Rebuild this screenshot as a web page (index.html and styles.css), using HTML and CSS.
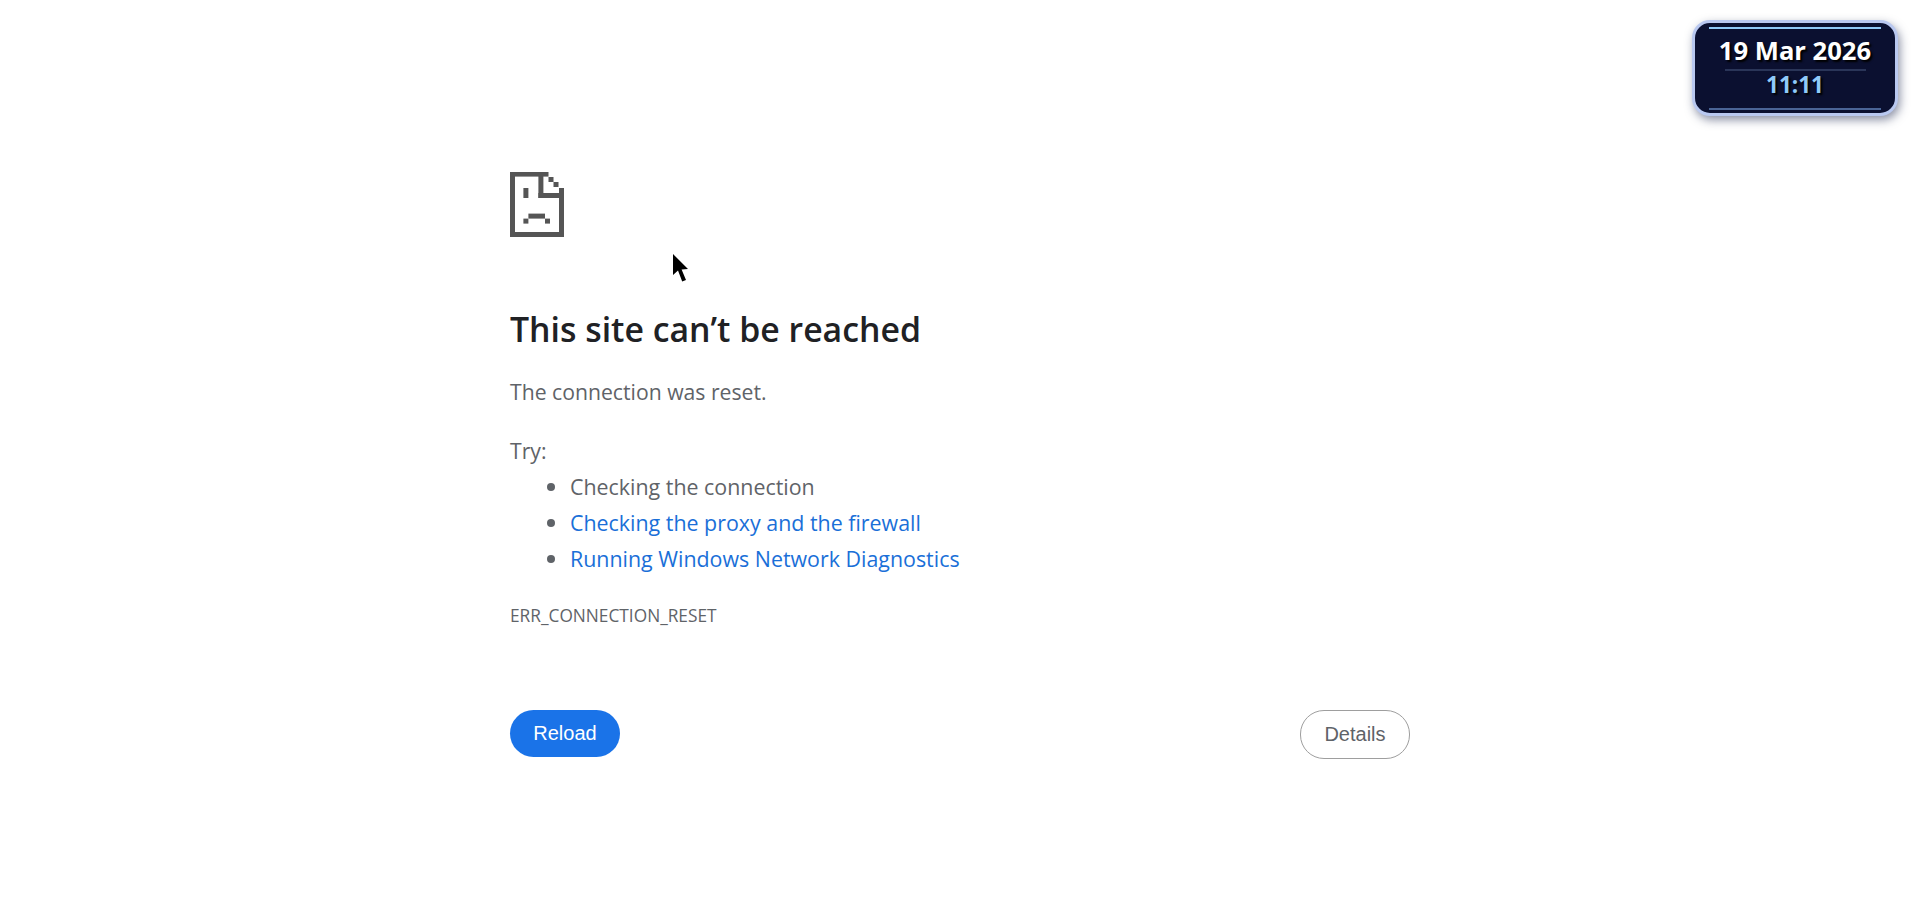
FILE: index.html
```html
<!DOCTYPE html>
<html lang="en">
<head>
<meta charset="utf-8">
<title>This site can't be reached</title>
<link rel="stylesheet" href="styles.css">
</head>
<body>
<main class="page">
  <svg class="sad-file" width="54" height="65" viewBox="0 0 54 65" aria-hidden="true">
    <g fill="#555">
      <rect x="0" y="0" width="5" height="65"/>
      <rect x="0" y="0" width="38.5" height="4.6"/>
      <rect x="28.4" y="4" width="5" height="22"/>
      <rect x="28.4" y="21" width="25.6" height="5"/>
      <rect x="38.5" y="5" width="5" height="5"/>
      <rect x="43.5" y="10" width="5" height="5"/>
      <rect x="49" y="16" width="5" height="49"/>
      <rect x="0" y="60" width="54" height="5"/>
      <rect x="13.4" y="16" width="5" height="10"/>
      <rect x="18.4" y="41.6" width="16.6" height="5"/>
      <rect x="13.4" y="46.6" width="5" height="5"/>
      <rect x="35" y="46.6" width="5" height="5"/>
    </g>
  </svg>
  <h1 class="title">This site can’t be reached</h1>
  <p class="summary">The connection was reset.</p>
  <p class="try">Try:</p>
  <ul class="suggestions">
    <li>Checking the connection</li>
    <li><a href="#">Checking the proxy and the firewall</a></li>
    <li><a href="#">Running Windows Network Diagnostics</a></li>
  </ul>
  <div class="error-code">ERR_CONNECTION_RESET</div>
  <div class="actions">
    <button class="btn btn-primary" type="button">Reload</button>
    <button class="btn btn-secondary" type="button">Details</button>
  </div>
</main>

<svg class="cursor" width="18" height="29" viewBox="0 0 18 29" aria-hidden="true">
  <path d="M1 0V21L6 16.5L10.2 27.5L14 26L9.6 15.6L16 15Z" fill="#000"/>
</svg>

<aside class="clock">
  <div class="clock-date">19 Mar 2026</div>
  <div class="clock-rule"></div>
  <div class="clock-time">11:11</div>
</aside>
</body>
</html>
```

FILE: styles.css
```css
* { box-sizing: border-box; }

html, body {
  margin: 0;
  height: 100%;
  background: #fff;
  overflow: hidden;
}

body {
  font-family: "Open Sans", "Noto Sans", sans-serif;
  color: #5f6368;
}

.page {
  width: 900px;
  margin: 0 auto;
  padding-top: 172px;
}

.sad-file {
  display: block;
}

.title {
  margin: 69px 0 0;
  font-size: 33.8px;
  line-height: 46px;
  font-weight: 600;
  color: #202124;
}

.summary {
  margin: 22px 0 0;
  font-size: 21.2px;
  line-height: 36px;
}

.try {
  margin: 23px 0 0;
  font-size: 21.2px;
  line-height: 36px;
}

.suggestions {
  margin: 0;
  padding-left: 60px;
  list-style: none;
  font-size: 21.4px;
  line-height: 36px;
}

.suggestions li {
  position: relative;
}

.suggestions li::before {
  content: "";
  position: absolute;
  left: -23px;
  top: 14px;
  width: 8px;
  height: 8px;
  border-radius: 50%;
  background: #5f6368;
}

.suggestions a {
  color: #1a6fd8;
  text-decoration: none;
}

.error-code {
  margin-top: 21px;
  font-size: 17.3px;
  line-height: 36px;
}

.actions {
  display: flex;
  justify-content: space-between;
  align-items: flex-start;
  margin-top: 76px;
}

.btn {
  width: 110px;
  border-radius: 24px;
  font-family: "Liberation Sans", Arial, sans-serif;
  font-size: 20px;
  padding: 0;
}

.btn-primary {
  height: 47px;
  border: 0;
  background: #1a73e8;
  color: #fff;
}

.btn-secondary {
  height: 49px;
  border: 1px solid #9e9e9e;
  background: #fff;
  color: #5f6368;
}

.cursor {
  position: absolute;
  left: 672px;
  top: 254px;
}

.clock {
  position: absolute;
  top: 20px;
  left: 1692px;
  width: 206px;
  height: 96px;
  padding-top: 12px;
  display: flex;
  flex-direction: column;
  align-items: center;
  background: #0b1030;
  border: 3px solid #b9c8f0;
  border-radius: 18px;
  box-shadow: 2px 4px 10px rgba(30, 40, 80, 0.5);
}

.clock::before,
.clock::after {
  content: "";
  position: absolute;
  left: 14px;
  right: 14px;
  height: 2px;
}

.clock::before {
  top: 4px;
  background: #90caf9;
}

.clock::after {
  bottom: 3px;
  background: #4a6496;
}

.clock-date {
  font-size: 25.6px;
  line-height: 32px;
  font-weight: 700;
  color: #fff;
  text-shadow: 2px 2px 2px #000;
}

.clock-rule {
  width: 141px;
  height: 2px;
  margin-top: 2px;
  background: #2a3558;
}

.clock-time {
  font-size: 22.5px;
  line-height: 26px;
  margin-top: 1px;
  font-weight: 700;
  color: #90caf9;
  text-shadow: 2px 2px 2px #000;
}
```
